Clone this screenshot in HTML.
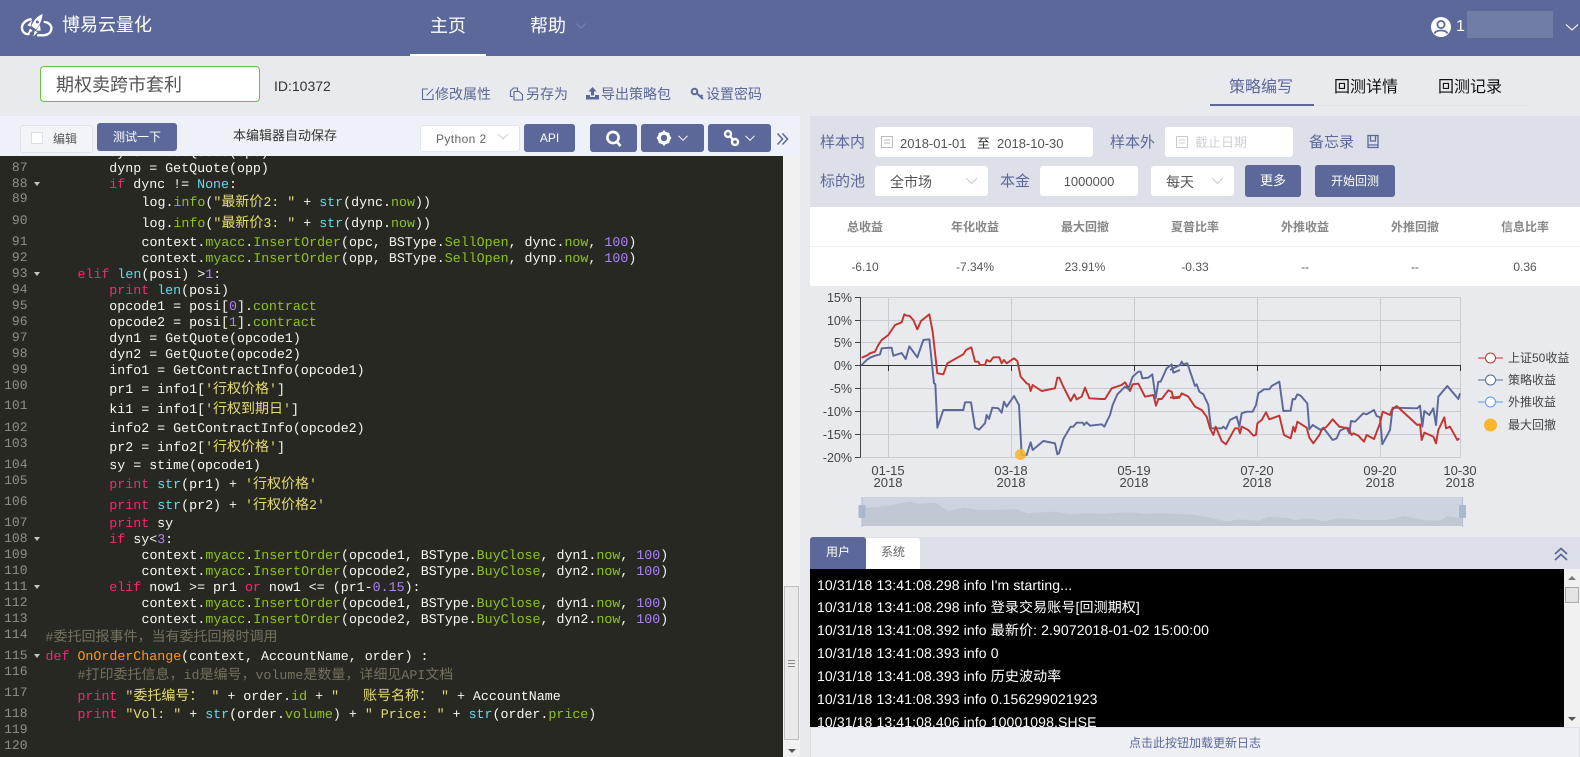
<!DOCTYPE html>
<html lang="zh-CN"><head><meta charset="utf-8"><title>博易云量化</title>
<style>
*{box-sizing:border-box}
html,body{margin:0;padding:0;width:1580px;height:757px;overflow:hidden;background:#e9eaee;font-family:"Liberation Sans","Noto Sans CJK SC",sans-serif}
.a{position:absolute;white-space:pre}
.t{position:absolute;white-space:pre;line-height:20px;height:20px}
.btn{position:absolute;background:#5b6899;border-radius:3px;color:#fff;text-align:center}
.box{position:absolute;background:#fff;border-radius:3px}
#code{position:absolute;left:0;top:156px;width:783px;height:601px;background:#272822;overflow:hidden;font-family:"Liberation Mono","Noto Sans CJK SC",monospace;font-size:13.300px;text-rendering:geometricPrecision;color:#f8f8f2}
#code div{position:absolute;white-space:pre;line-height:16px;height:16px}
#code .n{color:#8f908a;right:755.500px;text-align:right;font-size:13px}
.c{margin-top:1px}
#code i{font-style:normal}
#code u{font-size:14px;text-decoration:none}
.k{color:#f92672}.s{color:#e6db74}.f{color:#66d9ef}.g{color:#8fc31f}.m{color:#ae81ff}.o{color:#75715e}.d{color:#fd971f}
#code .fold{width:0;height:0;border-left:3px solid transparent;border-right:3px solid transparent;border-top:4px solid #c8c8c2;left:34px}
.st{position:absolute;width:110px;text-align:center;font-size:13px;line-height:20px}
.lg{position:absolute;left:817px;color:#fff;font-size:14px;line-height:20px;white-space:pre;letter-spacing:.12px;text-rendering:geometricPrecision}
</style></head><body>

<!-- header -->
<div class="a" style="left:0;top:0;width:1580px;height:56px;background:#5b6899"></div>
<svg class="a" style="left:14px;top:10px" width="44" height="32" viewBox="0 0 132 96" fill="none" stroke="#fff" stroke-width="7" stroke-linecap="round">
<path d="M50 28C35 30 22 42 24 56C26 68 36 74 44 72"/><path d="M92 36C106 38 114 48 112 58C110 70 98 77 82 76H72"/>
<path d="M86 12C84 30 76 48 66 58L52 48C58 32 70 18 86 12Z" fill="#fff" stroke="none"/><circle cx="70" cy="36" r="4.500" fill="#5b6899" stroke="none"/>
<path d="M54 30L40 46L50 50ZM78 44L80 62L66 62ZM48 56L40 74L56 62ZM62 62L58 80L71 66Z" fill="#fff" stroke="none"/></svg>
<div class="a" style="left:62px;top:12px;font-size:18px;line-height:26px;color:#fff">博易云量化</div>
<div class="a" style="left:430px;top:13px;font-size:18px;line-height:26px;color:#fff">主页</div>
<div class="a" style="left:410px;top:54px;width:76px;height:2px;background:#fff"></div>
<div class="a" style="left:530px;top:13px;font-size:18px;line-height:26px;color:#fff">帮助</div>
<svg class="a" style="left:575px;top:22px" width="12" height="8" fill="none" stroke="#7683ab" stroke-width="1.200"><path d="M1.500 1.500L6 6L10.500 1.500"/></svg>
<svg class="a" style="left:1431px;top:17px" width="20" height="20" viewBox="0 0 20 20"><circle cx="10" cy="10" r="10" fill="#fff"/><circle cx="10" cy="7.500" r="3.600" fill="none" stroke="#5b6899" stroke-width="1.800"/><path d="M3.500 16.500C5 12.500 15 12.500 16.500 16.500" fill="none" stroke="#5b6899" stroke-width="1.800"/></svg>
<div class="a" style="left:1456px;top:17px;font-size:16px;line-height:20px;color:#fff">1</div>
<div class="a" style="left:1467px;top:11px;width:86px;height:27px;background:#717da5"></div>
<svg class="a" style="left:1565px;top:23px" width="14" height="9" fill="none" stroke="#fff" stroke-width="1.100"><path d="M1 1.500L7 7L13 1.500"/></svg>

<!-- sub bar -->
<div class="a" style="left:40px;top:66px;width:220px;height:36px;background:#fff;border:1px solid #67c23a;border-radius:4px"></div>
<div class="a" style="left:56px;top:73px;font-size:18px;line-height:24px;color:#555">期权卖跨市套利</div>
<div class="a" style="left:274px;top:77px;font-size:14px;line-height:18px;color:#333">ID:10372</div>

<svg class="a" style="left:421px;top:87px" width="14" height="14" fill="none" stroke="#5b6899" stroke-width="1.100"><path d="M7 2H1.500V12.500H12V7"/><path d="M5.500 8.500L12 2"/></svg>
<div class="t" style="left:435px;top:84px;font-size:14px;color:#5b6899">修改属性</div>
<svg class="a" style="left:509px;top:87px" width="15" height="14" fill="none" stroke="#5b6899" stroke-width="1.100"><path d="M4 9.500H1.500V4L4.500 1H8.500V4"/><path d="M5 4.500H10L13.500 7.500V13H5Z"/></svg>
<div class="t" style="left:526px;top:84px;font-size:14px;color:#5b6899">另存为</div>
<svg class="a" style="left:585px;top:86px" width="15" height="15" fill="#5b6899"><path d="M7.500 1L11.500 5.500H9V9.500H6V5.500H3.500Z"/><path d="M1 9H5V11H10V9H14V13.500H1Z"/></svg>
<div class="t" style="left:601px;top:84px;font-size:14px;color:#5b6899">导出策略包</div>
<svg class="a" style="left:690px;top:87px" width="15" height="14" fill="none" stroke="#5b6899" stroke-width="2"><circle cx="4.500" cy="4.500" r="2.800"/><path d="M7 6.500L13 12M10.500 10L12.500 8"/></svg>
<div class="t" style="left:706px;top:84px;font-size:14px;color:#5b6899">设置密码</div>

<div class="t" style="left:1229px;top:78px;font-size:16px;color:#5b6899">策略编写</div>
<div class="t" style="left:1334px;top:78px;font-size:16px;color:#111">回测详情</div>
<div class="t" style="left:1438px;top:78px;font-size:16px;color:#111">回测记录</div>
<div class="a" style="left:1210px;top:105px;width:318px;height:1px;background:#e2e3e8"></div>
<div class="a" style="left:1210px;top:103.500px;width:104px;height:2px;background:#5b6899"></div>

<!-- toolbar -->
<div class="a" style="left:0;top:116px;width:800px;height:40px;background:#eef1f7"></div>
<div class="box" style="left:20px;top:125px;width:73px;height:28px;border:1px solid #e0e2e8;background:#f3f4f8"></div>
<div class="a" style="left:31px;top:132px;width:12px;height:12px;background:#fff;border:1px solid #dcdfe6"></div>
<div class="t" style="left:53px;top:129px;font-size:12px;color:#555">编辑</div>
<div class="btn" style="left:97px;top:123px;width:80px;height:28px;font-size:12px;line-height:29px">测试一下</div>
<div class="t" style="left:233px;top:126px;font-size:13px;color:#333">本编辑器自动保存</div>
<div class="box" style="left:420px;top:125px;width:100px;height:27px;border:1px solid #e4e6ec"></div>
<div class="t" style="left:436px;top:129px;font-size:12px;color:#666;letter-spacing:.4px">Python 2</div>
<svg class="a" style="left:497px;top:133px" width="12" height="8" fill="none" stroke="#cfd2da" stroke-width="1.200"><path d="M1 1L6 6L11 1"/></svg>
<div class="btn" style="left:524px;top:124px;width:51px;height:28px;font-size:12px;line-height:28px">API</div>
<div class="btn" style="left:590px;top:124px;width:47px;height:28px"></div>
<svg class="a" style="left:604px;top:129px" width="20" height="19" fill="none" stroke="#fff" stroke-width="2.600"><circle cx="9" cy="8.500" r="5.600"/><path d="M13 13L16.500 17"/></svg>
<div class="btn" style="left:641px;top:124px;width:63px;height:28px"></div>
<svg class="a" style="left:656px;top:130px" width="16" height="16" viewBox="0 0 16 16"><path d="M8 3.200a4.800 4.800 0 1 0 .01 0Z" fill="none" stroke="#fff" stroke-width="3.200"/><path d="M8 .5V4M8 12V15.500M.9 8H4M12 8H15.100M3 3L5 5M11 11L13 13M13 3L11 5M5 11L3 13" stroke="#fff" stroke-width="2.200"/></svg>
<svg class="a" style="left:678px;top:135px" width="10" height="7" fill="none" stroke="#fff" stroke-width="1"><path d="M.5 .8L5 5.300L9.500 .8"/></svg>
<div class="btn" style="left:708px;top:124px;width:63px;height:28px"></div>
<svg class="a" style="left:723px;top:129px" width="17" height="18" fill="none" stroke="#fff" stroke-width="2.400"><circle cx="5" cy="5" r="3"/><circle cx="12" cy="13" r="3"/><path d="M7 7L10 11"/></svg>
<svg class="a" style="left:745px;top:135px" width="10" height="7" fill="none" stroke="#fff" stroke-width="1"><path d="M.5 .8L5 5.300L9.500 .8"/></svg>
<svg class="a" style="left:776px;top:132px" width="13" height="14" fill="none" stroke="#5b6899" stroke-width="1.500"><path d="M1.500 1.500L6.500 7L1.500 12.500M6.500 1.500L11.500 7L6.500 12.500"/></svg>

<!-- code -->
<div id="code">
<div class="n" style="top:-12px">86</div><div class="c" style="left:109.300px;top:-12.300px">dync = GetQuote(opc)</div>
<div class="n" style="top:3.700px">87</div><div class="c" style="left:109.300px;top:3.700px">dynp = GetQuote(opp)</div>
<div class="n" style="top:19.700px">88</div><div class="fold" style="top:26px"></div><div class="c" style="left:109.300px;top:19.700px"><i class="k">if</i> dync != <i class="f">None</i>:</div>
<div class="n" style="top:35px">89</div><div class="c" style="left:141.500px;top:38px">log.<i class="g">info</i>(<i class="s">"<u>最新价</u>2: "</i> + <i class="f">str</i>(dync.<i class="g">now</i>))</div>
<div class="n" style="top:56.700px">90</div><div class="c" style="left:141.500px;top:59px">log.<i class="g">info</i>(<i class="s">"<u>最新价</u>3: "</i> + <i class="f">str</i>(dynp.<i class="g">now</i>))</div>
<div class="n" style="top:77.700px">91</div><div class="c" style="left:141.500px;top:77.700px">context.<i class="g">myacc</i>.<i class="g">InsertOrder</i>(opc, BSType.<i class="g">SellOpen</i>, dync.<i class="g">now</i>, <i class="m">100</i>)</div>
<div class="n" style="top:93.700px">92</div><div class="c" style="left:141.500px;top:93.700px">context.<i class="g">myacc</i>.<i class="g">InsertOrder</i>(opp, BSType.<i class="g">SellOpen</i>, dynp.<i class="g">now</i>, <i class="m">100</i>)</div>
<div class="n" style="top:109.700px">93</div><div class="fold" style="top:116px"></div><div class="c" style="left:77.500px;top:109.700px"><i class="k">elif</i> <i class="f">len</i>(posi) &gt;<i class="m">1</i>:</div>
<div class="n" style="top:125.700px">94</div><div class="c" style="left:109.300px;top:125.700px"><i class="k">print</i> <i class="f">len</i>(posi)</div>
<div class="n" style="top:141.700px">95</div><div class="c" style="left:109.300px;top:141.700px">opcode1 = posi[<i class="m">0</i>].<i class="g">contract</i></div>
<div class="n" style="top:157.700px">96</div><div class="c" style="left:109.300px;top:157.700px">opcode2 = posi[<i class="m">1</i>].<i class="g">contract</i></div>
<div class="n" style="top:173.700px">97</div><div class="c" style="left:109.300px;top:173.700px">dyn1 = GetQuote(opcode1)</div>
<div class="n" style="top:189.700px">98</div><div class="c" style="left:109.300px;top:189.700px">dyn2 = GetQuote(opcode2)</div>
<div class="n" style="top:205.700px">99</div><div class="c" style="left:109.300px;top:205.700px">info1 = GetContractInfo(opcode1)</div>
<div class="n" style="top:221.700px">100</div><div class="c" style="left:109.300px;top:225px">pr1 = info1[<i class="s">'<u>行权价格</u>'</i>]</div>
<div class="n" style="top:241.700px">101</div><div class="c" style="left:109.300px;top:245px">ki1 = info1[<i class="s">'<u>行权到期日</u>'</i>]</div>
<div class="n" style="top:263.500px">102</div><div class="c" style="left:109.300px;top:263.500px">info2 = GetContractInfo(opcode2)</div>
<div class="n" style="top:279.500px">103</div><div class="c" style="left:109.300px;top:282.500px">pr2 = info2[<i class="s">'<u>行权价格</u>'</i>]</div>
<div class="n" style="top:300.500px">104</div><div class="c" style="left:109.300px;top:300.500px">sy = stime(opcode1)</div>
<div class="n" style="top:317px">105</div><div class="c" style="left:109.300px;top:320px"><i class="k">print</i> <i class="f">str</i>(pr1) + <i class="s">'<u>行权价格</u>'</i></div>
<div class="n" style="top:337.500px">106</div><div class="c" style="left:109.300px;top:341px"><i class="k">print</i> <i class="f">str</i>(pr2) + <i class="s">'<u>行权价格</u>2'</i></div>
<div class="n" style="top:359px">107</div><div class="c" style="left:109.300px;top:359px"><i class="k">print</i> sy</div>
<div class="n" style="top:375px">108</div><div class="fold" style="top:381px"></div><div class="c" style="left:109.300px;top:375px"><i class="k">if</i> sy&lt;<i class="m">3</i>:</div>
<div class="n" style="top:391px">109</div><div class="c" style="left:141.500px;top:391px">context.<i class="g">myacc</i>.<i class="g">InsertOrder</i>(opcode1, BSType.<i class="g">BuyClose</i>, dyn1.<i class="g">now</i>, <i class="m">100</i>)</div>
<div class="n" style="top:407px">110</div><div class="c" style="left:141.500px;top:407px">context.<i class="g">myacc</i>.<i class="g">InsertOrder</i>(opcode2, BSType.<i class="g">BuyClose</i>, dyn2.<i class="g">now</i>, <i class="m">100</i>)</div>
<div class="n" style="top:423px">111</div><div class="fold" style="top:429px"></div><div class="c" style="left:109.300px;top:423px"><i class="k">elif</i> now1 &gt;= pr1 <i class="k">or</i> now1 &lt;= (pr1-<i class="m">0.15</i>):</div>
<div class="n" style="top:439px">112</div><div class="c" style="left:141.500px;top:439px">context.<i class="g">myacc</i>.<i class="g">InsertOrder</i>(opcode1, BSType.<i class="g">BuyClose</i>, dyn1.<i class="g">now</i>, <i class="m">100</i>)</div>
<div class="n" style="top:455px">113</div><div class="c" style="left:141.500px;top:455px">context.<i class="g">myacc</i>.<i class="g">InsertOrder</i>(opcode2, BSType.<i class="g">BuyClose</i>, dyn2.<i class="g">now</i>, <i class="m">100</i>)</div>
<div class="n" style="top:470.700px">114</div><div class="c o" style="left:45.500px;top:473px">#<u>委托回报事件，当有委托回报时调用</u></div>
<div class="n" style="top:492px">115</div><div class="fold" style="top:498px"></div><div class="c" style="left:45.500px;top:492px"><i class="k">def</i> <i class="d">OnOrderChange</i>(context, AccountName, order) :</div>
<div class="n" style="top:508px">116</div><div class="c o" style="left:77.500px;top:511px">#<u>打印委托信息，</u>id<u>是编号，</u>volume<u>是数量，详细见</u>API<u>文档</u></div>
<div class="n" style="top:529px">117</div><div class="c" style="left:77.500px;top:532px"><i class="k">print</i> <i class="s">"<u>委托编号：</u> "</i> + order.<i class="g">id</i> + <i class="s">"   <u>账号名称：</u> "</i> + AccountName</div>
<div class="n" style="top:549.500px">118</div><div class="c" style="left:77.500px;top:550px"><i class="k">print</i> <i class="s">"Vol: "</i> + <i class="f">str</i>(order.<i class="g">volume</i>) + <i class="s">" Price: "</i> + <i class="f">str</i>(order.<i class="g">price</i>)</div>
<div class="n" style="top:566px">119</div>
<div class="n" style="top:582px">120</div>
</div>
<!-- editor scrollbar -->
<div class="a" style="left:783px;top:156px;width:17px;height:601px;background:#f1f1f1"></div>
<div class="a" style="left:784px;top:586px;width:15px;height:154px;background:#eaeaea;border:1px solid #bdbdbd"></div>
<div class="a" style="left:788px;top:660px;width:7px;height:7px;border-top:1px solid #888;border-bottom:1px solid #888"></div>
<div class="a" style="left:788px;top:663px;width:7px;height:1px;background:#888"></div>
<div class="a" style="left:788px;top:749px;border-left:4px solid transparent;border-right:4px solid transparent;border-top:4px solid #555"></div>

<!-- right form -->
<div class="a" style="left:810px;top:116px;width:770px;height:91px;background:#dde0e9"></div>
<div class="t" style="left:820px;top:133px;font-size:15px;color:#5b6899">样本内</div>
<div class="box" style="left:875px;top:127px;width:218px;height:30px"></div>
<svg class="a" style="left:880px;top:135px" width="14" height="14" fill="none" stroke="#bbb"><path d="M1.500 1.500H12.500V12.500H1.500ZM4 5H10M4 8H10"/></svg>
<div class="t" style="left:900px;top:134px;font-size:13px;color:#555">2018-01-01</div>
<div class="t" style="left:977px;top:134px;font-size:13px;color:#333">至</div>
<div class="t" style="left:997px;top:134px;font-size:13px;color:#555">2018-10-30</div>
<div class="t" style="left:1110px;top:133px;font-size:15px;color:#5b6899">样本外</div>
<div class="box" style="left:1165px;top:127px;width:128px;height:30px"></div>
<svg class="a" style="left:1175px;top:135px" width="14" height="14" fill="none" stroke="#ccc"><path d="M1.500 1.500H12.500V12.500H1.500ZM4 5H10M4 8H10"/></svg>
<div class="t" style="left:1195px;top:133px;font-size:13px;color:#cfd1d6">截止日期</div>
<div class="t" style="left:1309px;top:133px;font-size:15px;color:#5b6899">备忘录</div>
<svg class="a" style="left:1366px;top:134px" width="14" height="16" fill="none" stroke="#5b6899" stroke-width="1.300"><path d="M2 1.500H12V13.500H2ZM4.500 1.500V7H9.500V1.500M2 11H12"/></svg>

<div class="t" style="left:820px;top:172px;font-size:15px;color:#5b6899">标的池</div>
<div class="box" style="left:875px;top:166px;width:113px;height:30px"></div>
<div class="t" style="left:890px;top:172px;font-size:14px;color:#555">全市场</div>
<svg class="a" style="left:965px;top:177px" width="13" height="8" fill="none" stroke="#c8ccd4" stroke-width="1.100"><path d="M1 1L6.500 6.500L12 1"/></svg>
<div class="t" style="left:1000px;top:172px;font-size:15px;color:#5b6899">本金</div>
<div class="box" style="left:1040px;top:166px;width:98px;height:30px"></div>
<div class="t" style="left:1040px;top:172px;width:98px;text-align:center;font-size:13px;color:#555">1000000</div>
<div class="box" style="left:1151px;top:166px;width:83px;height:30px"></div>
<div class="t" style="left:1166px;top:172px;font-size:14px;color:#555">每天</div>
<svg class="a" style="left:1211px;top:177px" width="13" height="8" fill="none" stroke="#c8ccd4" stroke-width="1.100"><path d="M1 1L6.500 6.500L12 1"/></svg>
<div class="btn" style="left:1245px;top:165px;width:56px;height:32px;font-size:13px;line-height:32px">更多</div>
<div class="btn" style="left:1315px;top:165px;width:80px;height:32px;font-size:12px;line-height:33px">开始回测</div>

<!-- stats -->
<div class="a" style="left:810px;top:207px;width:770px;height:79px;background:#fff"></div>
<div class="a" style="left:810px;top:246px;width:770px;height:1px;background:#eceef2"></div>
<div class="st" style="left:810px;top:217px;color:#888;font-weight:bold;font-size:12px">总收益</div>
<div class="st" style="left:920px;top:217px;color:#888;font-weight:bold;font-size:12px">年化收益</div>
<div class="st" style="left:1030px;top:217px;color:#888;font-weight:bold;font-size:12px">最大回撤</div>
<div class="st" style="left:1140px;top:217px;color:#888;font-weight:bold;font-size:12px">夏普比率</div>
<div class="st" style="left:1250px;top:217px;color:#888;font-weight:bold;font-size:12px">外推收益</div>
<div class="st" style="left:1360px;top:217px;color:#888;font-weight:bold;font-size:12px">外推回撤</div>
<div class="st" style="left:1470px;top:217px;color:#888;font-weight:bold;font-size:12px">信息比率</div>
<div class="st" style="left:810px;top:257px;color:#555;font-size:12px">-6.10</div>
<div class="st" style="left:920px;top:257px;color:#555;font-size:12px">-7.34%</div>
<div class="st" style="left:1030px;top:257px;color:#555;font-size:12px">23.91%</div>
<div class="st" style="left:1140px;top:257px;color:#555;font-size:12px">-0.33</div>
<div class="st" style="left:1250px;top:257px;color:#555;font-size:12px">--</div>
<div class="st" style="left:1360px;top:257px;color:#555;font-size:12px">--</div>
<div class="st" style="left:1470px;top:257px;color:#555;font-size:12px">0.36</div>

<!-- chart -->
<svg class="a" style="left:0;top:0;font-family:'Liberation Sans','Noto Sans CJK SC',sans-serif" width="1580" height="757" viewBox="0 0 1580 757">
<g stroke="#c9cbd1" stroke-width="1" fill="none">
<path d="M860.500 297.500H1460.500M860.500 320.500H1460.500M860.500 342.500H1460.500M860.500 388.500H1460.500M860.500 411.500H1460.500M860.500 434.500H1460.500M860.500 457.500H1460.500"/>
<path d="M888.500 297V457M1011.500 297V457M1134.500 297V457M1257.500 297V457M1380.500 297V457M1460.500 297V457"/>
</g>
<path d="M860.500 297V457.500M855 297.500H860.500M855 320.500H860.500M855 342.500H860.500M855 365.500H860.500M855 388.500H860.500M855 411.500H860.500M855 434.500H860.500M855 457.500H860.500" stroke="#444" fill="none"/>
<path d="M860.500 365.500H1461M888.500 365.500V371M1011.500 365.500V371M1134.500 365.500V371M1257.500 365.500V371M1380.500 365.500V371M1460.500 365.500V371" stroke="#333" fill="none"/>
<g font-size="12.500" fill="#444" text-anchor="end">
<text x="852" y="302">15%</text><text x="852" y="325">10%</text><text x="852" y="347">5%</text><text x="852" y="370">0%</text><text x="852" y="393">-5%</text><text x="852" y="416">-10%</text><text x="852" y="439">-15%</text><text x="852" y="462">-20%</text>
</g>
<g font-size="13" fill="#444" text-anchor="middle">
<text x="888" y="475">01-15</text><text x="888" y="487">2018</text>
<text x="1011" y="475">03-18</text><text x="1011" y="487">2018</text>
<text x="1134" y="475">05-19</text><text x="1134" y="487">2018</text>
<text x="1257" y="475">07-20</text><text x="1257" y="487">2018</text>
<text x="1380" y="475">09-20</text><text x="1380" y="487">2018</text>
<text x="1460" y="475">10-30</text><text x="1460" y="487">2018</text>
</g>
<g transform="translate(810,285) scale(.33333)" fill="none" stroke-width="5.800" stroke-linejoin="round">
<polyline stroke="#c23531" points="155,218 170,212 180,205 195,200 205,180 215,165 235,150 245,135 255,120 275,112 283,88 290,92 298,92 310,105 322,133 333,108 358,88 368,140 382,265 400,268 412,235 460,208 468,195 484,187 495,230 505,230 510,240 525,240 530,225 540,230 550,217 568,217 575,235 582,225 590,235 612,220 622,228 632,275 650,295 657,298 662,318 668,300 695,318 735,310 742,278 748,278 760,305 782,348 793,328 800,343 815,335 825,308 838,340 875,342 885,342 905,310 935,300 945,292 950,300 960,318 968,298 985,296 1005,335 1030,330 1038,362 1045,342 1055,342 1075,316 1085,320 1090,340 1110,338"/>
<polyline stroke="#5b6899" points="155,240 170,225 180,218 195,212 210,208 215,190 245,188 250,212 275,204 287,222 298,184 322,217 340,165 358,163 372,295 376,297 382,428 400,375 460,375 465,352 483,352 495,428 507,434 525,415 530,390 537,402 547,368 565,370 575,383 582,350 590,365 612,333 627,360 635,510 650,510 662,472 668,495 700,468 735,475 742,508 747,505 760,462 782,425 790,425 800,413 818,413 822,420 830,412 840,422 875,418 883,425 900,390 908,360 922,328 945,305 955,312 968,275 985,260 992,260 997,280 1015,278 1027,268 1037,340 1045,290 1052,290 1070,250 1085,238 1090,263 1110,255"/>
</g>
<g transform="translate(1180,285) scale(.33333)" fill="none" stroke-width="5.800" stroke-linejoin="round">
<polyline stroke="#5b6899" points="-30,255 0,240 5,230 10,238 22,235 45,303 50,298 58,320 70,328 85,360 93,430 125,430 130,425 138,432 150,405 170,395 178,425 185,385 200,380 218,380 228,360 235,325 252,313 268,313 275,303 298,290 310,378 332,377 338,342 345,343 352,328 362,332 382,355 388,433 398,420 422,435 430,428 458,465 470,460 480,437 500,428 508,445 513,408 525,410 550,385 560,388 582,375 590,393 600,397 607,478 630,435 638,368 712,370 720,362 727,425 733,378 748,390 760,370 768,420 775,335 802,303 835,342 840,325"/>
<polyline stroke="#c23531" points="-30,338 0,335 5,325 25,335 45,365 65,375 80,395 90,430 100,450 107,425 125,468 138,478 165,430 175,430 180,445 185,425 205,435 220,452 228,450 232,415 245,405 258,382 268,403 298,392 312,450 332,460 340,425 345,440 352,410 380,428 388,458 400,475 418,450 425,435 440,425 458,403 478,425 505,430 515,450 520,445 535,452 552,470 560,450 582,462 600,415 608,380 630,390 635,375 650,363 712,420 720,418 725,465 733,443 760,455 768,475 775,435 793,397 798,430 810,425 832,465 838,460"/>
</g>
<circle cx="1020.500" cy="454.500" r="5.500" fill="#f8b62d" opacity=".9"/>
<!-- legend -->
<g fill="#fff" stroke-width="1">
<path d="M1478 358H1503" stroke="#c23531"/><circle cx="1490.500" cy="358" r="5" stroke="#c23531"/>
<path d="M1478 380H1503" stroke="#5b6899"/><circle cx="1490.500" cy="380" r="5" stroke="#5b6899"/>
<path d="M1478 402H1503" stroke="#5b9bf0"/><circle cx="1490.500" cy="402" r="5" stroke="#5b9bf0"/>
<circle cx="1490.500" cy="425" r="6.500" fill="#f8b62d" stroke="none"/>
</g>
<g font-size="12" fill="#444"><text x="1508" y="362">上证50收益</text><text x="1508" y="384">策略收益</text><text x="1508" y="406">外推收益</text><text x="1508" y="429">最大回撤</text></g>
<!-- slider -->
<rect x="862" y="497" width="600.500" height="29" fill="#cdd4e0"/>
<path transform="translate(850,490) scale(.3985,.33333)" d="M32 55L90 48L150 35L175 42L215 38L245 63L285 52L320 60L420 58L445 69L515 65L555 73L590 70L640 72L680 67L710 67L735 72L790 70L860 74L900 82L945 94L975 88L1025 92L1050 80L1100 84L1115 90L1150 85L1190 93L1230 84L1290 90L1345 90L1390 78L1440 90L1480 92L1500 78L1535 85V108H32Z" fill="#c1c8d4"/>
<path d="M862 497V527M1462.500 497V527" stroke="#aebbd0"/>
<rect x="858.500" y="505" width="7" height="13" rx="1" fill="#a9b7cf"/><rect x="1459" y="505" width="7" height="13" rx="1" fill="#a9b7cf"/>
</svg>

<!-- log panel -->
<div class="a" style="left:810px;top:537px;width:770px;height:32px;background:#dde0e9"></div>
<div class="a" style="left:810px;top:537px;width:56px;height:32px;background:#5b6899;border-radius:3px 3px 0 0;color:#fff;font-size:12px;line-height:30px;text-align:center">用户</div>
<div class="a" style="left:866px;top:538px;width:54px;height:31px;background:#fff;border-radius:0 3px 0 0;color:#666;font-size:12px;line-height:29px;text-align:center">系统</div>
<svg class="a" style="left:1553px;top:547px" width="16" height="15" fill="none" stroke="#5b6899" stroke-width="1.800"><path d="M2 7L8 1.500L14 7M2 13L8 7.500L14 13"/></svg>
<div class="a" style="left:810px;top:569px;width:754px;height:158px;background:#000;overflow:hidden"></div>
<div class="a" style="left:810px;top:569px;width:754px;height:158px;overflow:hidden">
<div class="lg" style="top:5.500px;left:7px">10/31/18 13:41:08.298 info I'm starting...</div>
<div class="lg" style="top:28px;left:7px">10/31/18 13:41:08.298 info 登录交易账号[回测期权]</div>
<div class="lg" style="top:51px;left:7px">10/31/18 13:41:08.392 info 最新价: 2.9072018-01-02 15:00:00</div>
<div class="lg" style="top:74px;left:7px">10/31/18 13:41:08.393 info 0</div>
<div class="lg" style="top:97px;left:7px">10/31/18 13:41:08.393 info 历史波动率</div>
<div class="lg" style="top:120px;left:7px">10/31/18 13:41:08.393 info 0.156299021923</div>
<div class="lg" style="top:143px;left:7px">10/31/18 13:41:08.406 info 10001098.SHSE</div>
</div>
<div class="a" style="left:1564px;top:569px;width:16px;height:158px;background:#f1f1f1"></div>
<div class="a" style="left:1565px;top:587px;width:14px;height:16px;background:#e4e4e4;border:1px solid #aaa"></div>
<div class="a" style="left:1568px;top:576px;border-left:4px solid transparent;border-right:4px solid transparent;border-bottom:4px solid #777"></div>
<div class="a" style="left:1568px;top:717px;border-left:4px solid transparent;border-right:4px solid transparent;border-top:4px solid #555"></div>
<div class="a" style="left:810px;top:727px;width:770px;height:30px;background:#eeeff5;border:1px solid #dcdfe6;border-bottom:0;color:#5b6899;font-size:12px;line-height:28px"><span style="position:absolute;left:318px;top:1px">点击此按钮加载更新日志</span></div>
</body></html>
